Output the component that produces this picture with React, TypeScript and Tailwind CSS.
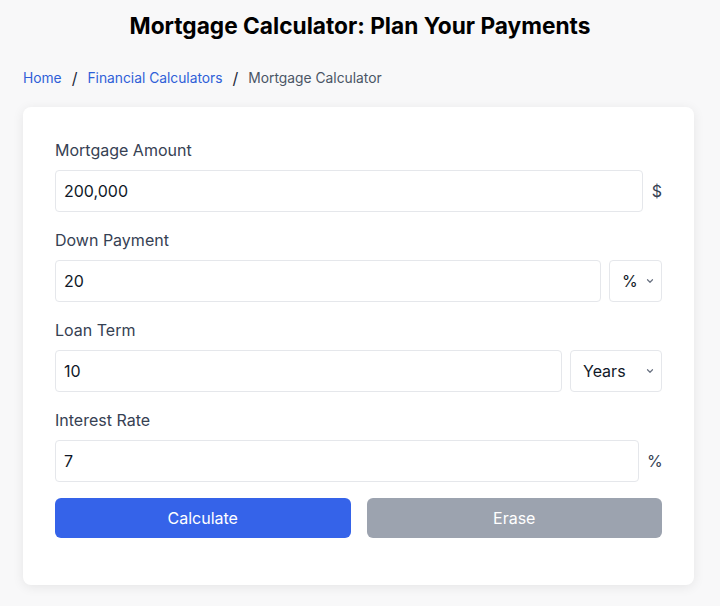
import React from "react";

function Chevron() {
  return (
    <svg width="10" height="10" viewBox="0 0 10 10" fill="none" className="text-gray-500">
      <path d="M2.5 3.75 5 6.25l2.5-2.5" stroke="currentColor" strokeWidth="1.2" strokeLinecap="round" strokeLinejoin="round" />
    </svg>
  );
}

function Field({ label, value, suffix, suffixWidth, select, selectWidth }: { label: string; value: string; suffix?: string; suffixWidth?: string; select?: string; selectWidth?: string }) {
  return (
    <div className="mb-4">
      <div className="text-base leading-6 text-gray-700 mb-2">{label}</div>
      <div className="flex items-center gap-2">
        <div className="flex-1 h-[42px] border border-gray-200 rounded bg-white flex items-center px-2 text-base text-gray-900">
          {value}
        </div>
        {suffix && <span className={`${suffixWidth} text-base text-gray-700 text-right`}>{suffix}</span>}
        {select && (
          <div className={`${selectWidth} h-[42px] border border-gray-200 rounded bg-white flex items-center justify-between pl-3 pr-1.5 text-base text-gray-900`}>
            <span>{select}</span>
            <Chevron />
          </div>
        )}
      </div>
    </div>
  );
}

export default function App() {
  return (
    <div className="min-h-[606px] bg-[#f8f8f9] px-[23px] pt-3" style={{ fontFamily: "Inter, 'Noto Sans', sans-serif" }}>
      <h1 className="text-center text-[22.7px] leading-7 font-bold text-black">Mortgage Calculator: Plan Your Payments</h1>
      <nav className="mt-[28px] flex items-center h-5 text-[13.8px] leading-5">
        <span className="text-[#2f5fd8]">Home</span>
        <span className="mx-2.5 text-gray-800 text-base leading-5">/</span>
        <span className="text-[#2f5fd8]">Financial Calculators</span>
        <span className="mx-2.5 text-gray-800 text-base leading-5">/</span>
        <span className="text-gray-600">Mortgage Calculator</span>
      </nav>
      <div className="mt-[19px] w-[671px] bg-white rounded-lg shadow-[0_2px_12px_rgba(0,0,0,0.08)] px-8 pt-[31px] pb-[47px]">
        <Field label="Mortgage Amount" value="200,000" suffix="$" suffixWidth="w-[11px]" />
        <Field label="Down Payment" value="20" select="%" selectWidth="w-[53px]" />
        <Field label="Loan Term" value="10" select="Years" selectWidth="w-[92px]" />
        <Field label="Interest Rate" value="7" suffix="%" suffixWidth="w-[15px]" />
        <div className="flex gap-4">
          <button className="flex-1 h-10 rounded-md bg-[#3563e9] text-white text-base">Calculate</button>
          <button className="flex-1 h-10 rounded-md bg-[#9ca3af] text-white text-base">Erase</button>
        </div>
      </div>
    </div>
  );
}
